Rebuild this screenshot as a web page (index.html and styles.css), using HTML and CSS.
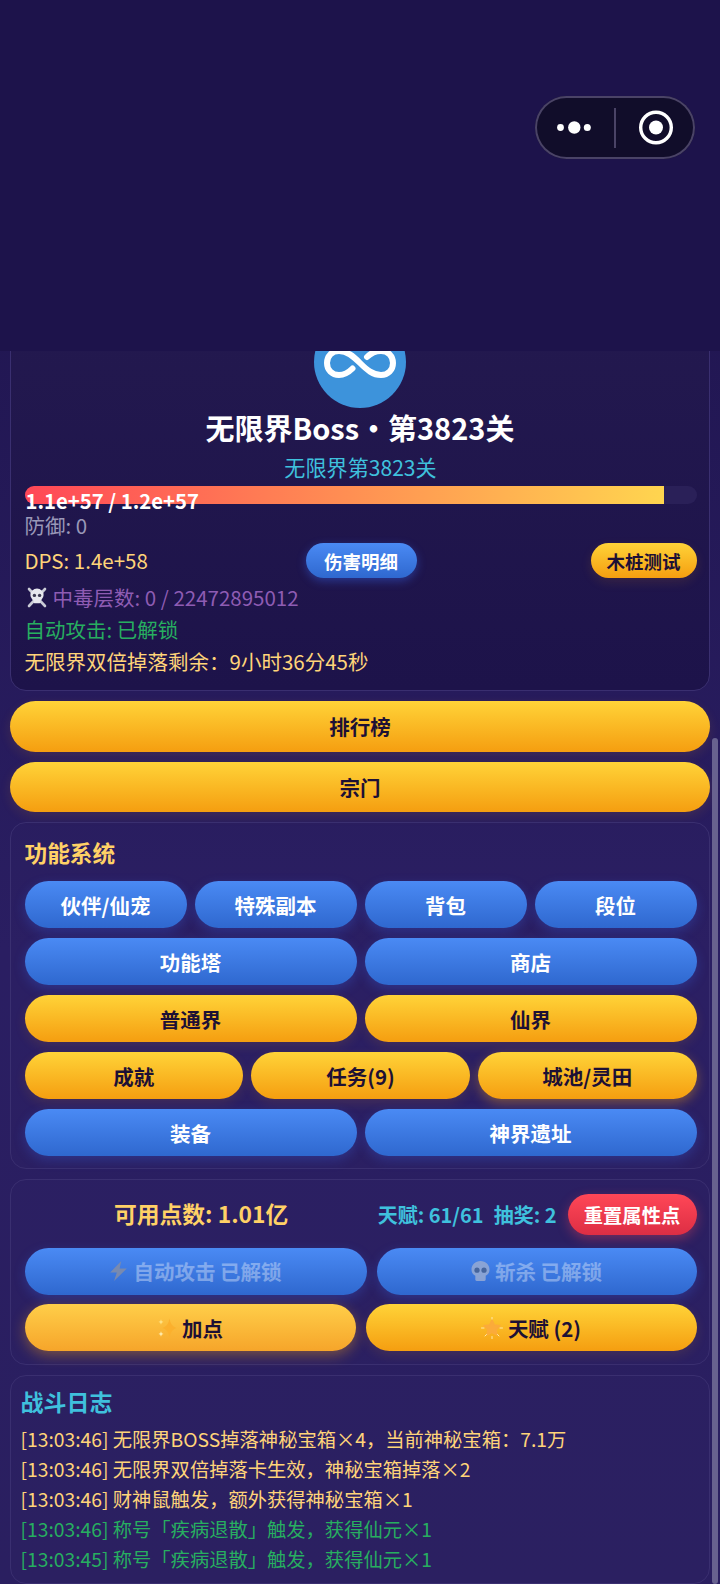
FILE: index.html
```html
<!DOCTYPE html>
<html lang="zh">
<head>
<meta charset="utf-8">
<title>无限界Boss</title>
<link rel="stylesheet" href="styles.css">
</head>
<body>
<header class="navbar">
  <div class="capsule">
    <svg class="capsule-icon" width="160" height="63" viewBox="0 0 160 63">
      <circle cx="25.5" cy="31.5" r="3.4" fill="#fff"/>
      <circle cx="39.3" cy="31.5" r="6.2" fill="#fff"/>
      <circle cx="52.3" cy="31.5" r="3.5" fill="#fff"/>
      <rect x="79" y="12" width="2" height="40" fill="#4a4366"/>
      <circle cx="121" cy="31.5" r="15.3" fill="none" stroke="#fff" stroke-width="3.4"/>
      <circle cx="121" cy="31.5" r="7" fill="#fff"/>
    </svg>
  </div>
</header>
<main class="scroller">
  <section class="card boss-card">
    <svg class="boss-icon" width="92" height="92" viewBox="0 0 92 92">
      <circle cx="46" cy="46" r="46" fill="#3d93db"/>
      <path d="M38.5 52.5C34 57 29 59 25 59C18 59 13 54 13 47C13 40 18 35 25 35C33 35 39 40 46 47C53 54 59 59 67 59C74 59 79 54 79 47C79 40 74 35 67 35C62 35 57 37 53 41" fill="none" stroke="#fff" stroke-width="6" stroke-linecap="round"/>
    </svg>
    <h1 class="boss-title">无限界Boss・第3823关</h1>
    <div class="boss-sub">无限界第3823关</div>
    <div class="hp-bar">
      <div class="hp-fill" style="width:95.1%"></div>
      <div class="hp-text">1.1e+57 / 1.2e+57</div>
    </div>
    <div class="line line-def">防御: 0</div>
    <div class="dps-row">
      <span class="dps-text">DPS: 1.4e+58</span>
      <button class="btn btn-blue btn-mini btn-detail">伤害明细</button>
      <button class="btn btn-gold btn-mini">木桩测试</button>
    </div>
    <div class="line line-poison">
      <svg class="emoji-skull" width="22" height="22" viewBox="0 0 22 22">
        <g stroke="#c9cbd6" stroke-width="2.6" stroke-linecap="round"><path d="M3 3L19 20"/><path d="M19 3L3 20"/></g>
        <ellipse cx="11" cy="9" rx="6.6" ry="6.4" fill="#e6e7ee"/>
        <rect x="7.5" y="13" width="7" height="4.2" rx="1" fill="#e6e7ee"/>
        <circle cx="8.4" cy="9.4" r="1.7" fill="#3c3a52"/><circle cx="13.6" cy="9.4" r="1.7" fill="#3c3a52"/>
      </svg>
      <span>中毒层数: 0 / 22472895012</span>
    </div>
    <div class="line line-auto">自动攻击: 已解锁</div>
    <div class="line line-double">无限界双倍掉落剩余：9小时36分45秒</div>
  </section>

  <button class="btn btn-gold btn-wide">排行榜</button>
  <button class="btn btn-gold btn-wide">宗门</button>

  <section class="card system-card">
    <h2 class="card-title">功能系统</h2>
    <div class="btn-row">
      <button class="btn btn-blue">伙伴/仙宠</button>
      <button class="btn btn-blue">特殊副本</button>
      <button class="btn btn-blue">背包</button>
      <button class="btn btn-blue">段位</button>
    </div>
    <div class="btn-row">
      <button class="btn btn-blue">功能塔</button>
      <button class="btn btn-blue">商店</button>
    </div>
    <div class="btn-row">
      <button class="btn btn-gold">普通界</button>
      <button class="btn btn-gold">仙界</button>
    </div>
    <div class="btn-row">
      <button class="btn btn-gold">成就</button>
      <button class="btn btn-gold">任务(9)</button>
      <button class="btn btn-gold btn-glow">城池/灵田</button>
    </div>
    <div class="btn-row">
      <button class="btn btn-blue">装备</button>
      <button class="btn btn-blue">神界遗址</button>
    </div>
  </section>

  <section class="card points-card">
    <div class="points-head">
      <div class="points-total">可用点数: 1.01亿</div>
      <div class="points-stats"><span>天赋: 61/61</span><span>抽奖: 2</span></div>
      <button class="btn btn-red">重置属性点</button>
    </div>
    <div class="btn-row">
      <button class="btn btn-blue btn-locked grow-a">
        <svg class="btn-icon" width="19" height="20" viewBox="0 0 17 20" preserveAspectRatio="none"><path d="M11 0L1 11.5H7L4.5 20L16 7.5H9.5Z" fill="#7f8cab"/></svg>
        <span>自动攻击 已解锁</span>
      </button>
      <button class="btn btn-blue btn-locked grow-b">
        <svg class="btn-icon" width="19" height="20" viewBox="0 0 19 20"><path d="M9.5 0C4.3 0 0.5 3.7 0.5 8.6C0.5 11.6 2 13.6 4.3 14.8V18.6C4.3 19.4 5 20 5.6 20H13.4C14 20 14.7 19.4 14.7 18.6V14.8C17 13.6 18.5 11.6 18.5 8.6C18.5 3.7 14.7 0 9.5 0Z" fill="#92a8d4"/><circle cx="6" cy="9.2" r="2.6" fill="#476396"/><circle cx="13" cy="9.2" r="2.6" fill="#476396"/></svg>
        <span>斩杀 已解锁</span>
      </button>
    </div>
    <div class="btn-row">
      <button class="btn btn-gold btn-soft">
        <svg class="btn-icon" width="20" height="20" viewBox="0 0 20 20"><path d="M12.5 0.5C13.6 5.8 15 8 19.5 10C15 12 13.6 14.2 12.5 19.5C11.4 14.2 10 12 5.5 10C10 8 11.4 5.8 12.5 0.5Z" fill="#fbb02d"/><path d="M4 1C4.3 2.8 5 3.5 6.6 3.9C5 4.3 4.3 5 4 6.8C3.7 5 3 4.3 1.4 3.9C3 3.5 3.7 2.8 4 1Z" fill="#ffe082"/><path d="M4 13C4.3 14.8 5 15.5 6.6 15.9C5 16.3 4.3 17 4 18.8C3.7 17 3 16.3 1.4 15.9C3 15.5 3.7 14.8 4 13Z" fill="#ffe9a8"/></svg>
        <span>加点</span>
      </button>
      <button class="btn btn-gold">
        <svg class="btn-icon" width="22" height="22" viewBox="0 0 22 22"><path d="M11 3L13.4 8L19 8.8L15 12.6L16 18L11 15.4L6 18L7 12.6L3 8.8L8.6 8Z" fill="#fbab3a" stroke="#fbab3a" stroke-width="1.5" stroke-linejoin="round"/><g stroke="#ffe9a8" stroke-width="1" stroke-linecap="round"><path d="M11 0V2"/><path d="M0.5 11H3"/><path d="M19 11H21.5"/><path d="M4 19L5.5 17.5"/><path d="M18 19L16.5 17.5"/><path d="M11 19.5V22"/></g></svg>
        <span>天赋 (2)</span>
      </button>
    </div>
  </section>

  <section class="card log-card">
    <h2 class="log-title">战斗日志</h2>
    <div class="log-line log-gold">[13:03:46] 无限界BOSS掉落神秘宝箱×4，当前神秘宝箱：7.1万</div>
    <div class="log-line log-gold">[13:03:46] 无限界双倍掉落卡生效，神秘宝箱掉落×2</div>
    <div class="log-line log-gold">[13:03:46] 财神鼠触发，额外获得神秘宝箱×1</div>
    <div class="log-line log-green">[13:03:46] 称号「疾病退散」触发，获得仙元×1</div>
    <div class="log-line log-green">[13:03:45] 称号「疾病退散」触发，获得仙元×1</div>
  </section>
</main>
<div class="scroll-thumb"></div>
</body>
</html>
```

FILE: styles.css
```css
* { box-sizing: border-box; }
html, body { margin: 0; padding: 0; }
body {
  position: relative;
  width: 720px;
  height: 1584px;
  overflow: hidden;
  display: flex;
  flex-direction: column;
  background: linear-gradient(180deg, #1d134b 0%, #2a1e62 60%, #2a1f60 100%);
  font-family: "Noto Sans CJK SC", "Noto Sans", sans-serif;
  color: #fff;
}
.navbar {
  position: relative;
  flex: 0 0 351px;
  background: #1d134b;
  z-index: 2;
}
.capsule {
  position: absolute;
  left: 535px;
  top: 96px;
  width: 160px;
  height: 63px;
  border-radius: 32px;
  background: #110d2a;
  box-shadow: inset 0 0 0 2px #4a4366;
}
.capsule-icon { display: block; }
.scroller {
  flex: 1;
  min-height: 0;
  overflow: hidden;
  padding: 0 10px;
  display: flex;
  flex-direction: column;
  gap: 10px;
}
.card {
  flex: none;
  border: 1px solid #3a2f70;
  border-radius: 16px;
  padding: 13px 12.5px 13px 13.5px;
  background: rgba(255, 255, 255, 0.008);
}
.boss-card {
  margin-top: -49px;
  display: flex;
  flex-direction: column;
  background: linear-gradient(180deg, #23194f, #1d134a);
  padding-bottom: 13px;
}
.boss-icon { display: block; align-self: center; margin-left: -1px; }
.boss-title {
  margin: 0 0 0 -1px;
  height: 40px;
  line-height: 38px;
  font-size: 29px;
  font-weight: 700;
  text-align: center;
}
.boss-sub {
  margin-top: 4px;
  height: 30px;
  line-height: 30px;
  font-size: 21.1px;
  text-align: center;
  color: #3fc1dd;
}
.hp-bar {
  position: relative;
  margin-top: 4px;
  margin-bottom: 7px;
  height: 18px;
  border-radius: 9px;
  background: #2a2058;
}
.hp-fill {
  height: 100%;
  border-radius: 9px 0 0 9px;
  background: linear-gradient(90deg, #ff4757, #ffd54f);
}
.hp-text {
  position: absolute;
  left: 1px;
  top: -1px;
  line-height: 30px;
  font-size: 20.3px;
  font-weight: 700;
  white-space: nowrap;
}
.line {
  height: 30px;
  line-height: 30px;
  font-size: 20.5px;
  white-space: nowrap;
}
.line-def { color: #9a98b8; margin-bottom: 2px; line-height: 28px; }
.dps-row {
  position: relative;
  display: flex;
  justify-content: space-between;
  align-items: center;
  height: 35px;
  margin-bottom: 5px;
}
.dps-text { font-size: 20.5px; color: #ffd479; padding-bottom: 2px; }
.line-poison {
  display: flex;
  align-items: center;
  gap: 5px;
  color: #8e5cb3;
  margin-bottom: 3px;
  padding-bottom: 2px;
}
.emoji-skull { flex: none; margin-left: 1px; }
.line-auto { color: #27ae60; margin-bottom: 2px; line-height: 27px; }
.line-double { color: #ffd479; height: 29px; line-height: 27px; }

.btn {
  flex: 1 1 0;
  min-width: 0;
  display: flex;
  align-items: center;
  justify-content: center;
  gap: 5px;
  height: 47px;
  border: 0;
  padding: 0;
  border-radius: 24px;
  font-family: inherit;
  font-size: 20.5px;
  font-weight: 700;
  white-space: nowrap;
}
.btn-blue {
  color: #fff;
  background: linear-gradient(180deg, #4a8af4, #2f68cf);
  box-shadow: 0 4px 12px rgba(55, 100, 230, 0.3);
}
.btn-gold {
  color: #1d1035;
  background: linear-gradient(180deg, #ffd338, #f59e10);
  box-shadow: 0 4px 12px rgba(245, 160, 20, 0.12);
}
.btn-glow { box-shadow: 0 4px 12px rgba(245, 160, 20, 0.4); }
.btn-soft {
  background: linear-gradient(180deg, #ffce49, #f6a52a);
  box-shadow: 0 4px 14px rgba(245, 160, 20, 0.4);
}
.btn-wide { flex: none; height: 50.5px; border-radius: 26px; }
.btn-mini {
  flex: none;
  height: 35px;
  border-radius: 18px;
  font-size: 18.5px;
}
.btn-mini.btn-gold { width: 106px; }
.btn-detail {
  position: absolute;
  left: 281px;
  width: 111px;
  box-shadow: 0 3px 10px rgba(55, 100, 230, 0.45);
}
.btn-red {
  flex: none;
  width: 129px;
  height: 41px;
  border-radius: 21px;
  font-size: 19.3px;
  color: #fff;
  background: linear-gradient(180deg, #ff4757, #dd2e44);
  box-shadow: 0 4px 12px rgba(255, 71, 87, 0.35);
}
.btn-locked span { opacity: 0.35; }
.btn-locked .btn-icon { opacity: 0.9; }
.btn-icon { flex: none; }
.grow-a { flex-grow: 342; }
.grow-b { flex-grow: 320; }

.system-card { display: flex; flex-direction: column; gap: 10px; padding-bottom: 12px; }
.card-title {
  margin: 0 0 -2px;
  height: 37px;
  line-height: 34px;
  font-size: 22.7px;
  font-weight: 700;
  color: #ffd166;
}
.btn-row { display: flex; gap: 8px; }
.points-card {
  display: flex;
  flex-direction: column;
  gap: 9.5px;
  padding-top: 14px;
}
.points-card .btn-row { gap: 10px; }
.points-head {
  display: flex;
  align-items: center;
  height: 41px;
  margin-bottom: 3.3px;
}
.points-total {
  flex: 1;
  text-align: center;
  font-size: 22.8px;
  font-weight: 700;
  color: #ffd166;
  line-height: 40px;
  height: 41px;
}
.points-stats {
  display: flex;
  gap: 10px;
  margin-right: 11px;
  font-size: 20px;
  font-weight: 700;
  color: #3fc1dd;
}
.log-card { padding: 12.5px 9.5px 8px; }
.log-title {
  margin: 0 0 6px;
  height: 30px;
  line-height: 25px;
  font-size: 23px;
  font-weight: 700;
  color: #3fc1dd;
}
.log-line {
  height: 30px;
  line-height: 28px;
  font-size: 19.3px;
  white-space: nowrap;
}
.log-gold { color: #ffd479; }
.log-green { color: #27ae60; }
.scroll-thumb {
  position: absolute;
  left: 712px;
  top: 738px;
  width: 6px;
  bottom: 0;
  border-radius: 3px;
  background: #68628f;
}
```
